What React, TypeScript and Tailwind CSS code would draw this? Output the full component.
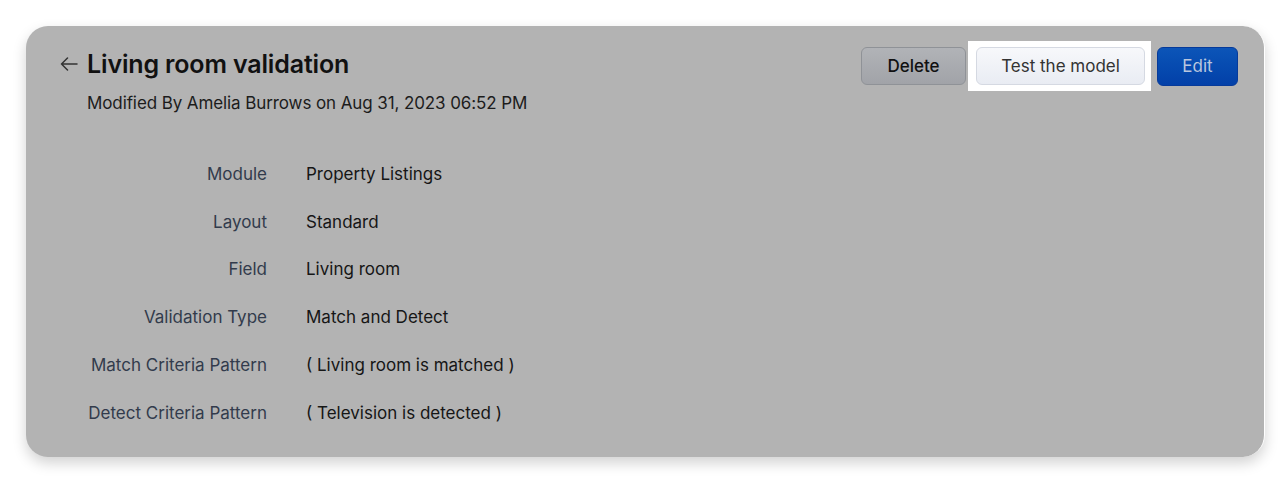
import React from "react";

const rows: [string, string][] = [
  ["Module", "Property Listings"],
  ["Layout", "Standard"],
  ["Field", "Living room"],
  ["Validation Type", "Match and Detect"],
  ["Match Criteria Pattern", "( Living room is matched )"],
  ["Detect Criteria Pattern", "( Television is detected )"],
];

export default function App() {
  return (
    <div
      className="w-[1285px] h-[486px] bg-white pt-[26px] pl-[26px]"
      style={{ fontFamily: "Inter, 'Noto Sans', sans-serif" }}
    >
      <div className="w-[1239px] h-[431px] rounded-[22px] bg-[#b3b3b3] shadow-[0_6px_14px_rgba(0,0,0,0.18)] border-r border-white pl-[34px] pr-[26px] pt-[15px]">
        <div className="flex justify-between items-start">
          <div className="pt-[6px]">
            <div className="flex items-center h-[34px]">
              <svg width="18" height="14" viewBox="0 0 18 14" className="mr-[9px]">
                <path d="M17 7H1.5M7.5 1L1.5 7l6 6" stroke="#333" strokeWidth="1.5" fill="none" strokeLinecap="round" strokeLinejoin="round" />
              </svg>
              <h1 className="text-[25px] font-semibold text-[#111] leading-none tracking-[-0.15px]">Living room validation</h1>
            </div>
            <div className="pl-[27px] mt-[10px] text-[17px] text-[#1c1c1c] tracking-[-0.1px]">
              Modified By Amelia Burrows on Aug 31, 2023 06:52 PM
            </div>
          </div>
          <div className="flex items-center">
            <button className="w-[105px] h-[38px] rounded-[6px] border border-[#8f9297] bg-gradient-to-b from-[#b1b3b7] to-[#a1a3a8] text-[17px] text-[#111] font-medium mr-[2px] pt-[2px]">
              Delete
            </button>
            <div className="bg-white pl-[8px] pr-[6px] py-[6px]">
              <button className="w-[169px] h-[38px] rounded-[6px] border border-[#d5d9e2] bg-gradient-to-b from-[#f7f8fb] to-[#e9ecf3] text-[17px] text-[#333] pt-[2px]">
                Test the model
              </button>
            </div>
            <button className="w-[81px] h-[39px] rounded-[6px] bg-gradient-to-b from-[#0c55b8] to-[#0340a8] border border-[#063a9a] text-[17px] text-[#b9c6de] ml-[6px] pt-[2px]">
              Edit
            </button>
          </div>
        </div>
        <div className="mt-[46px] flex flex-col gap-[23.8px]">
          {rows.map(([k, v]) => (
            <div key={k} className="flex items-center h-[24px] text-[17px]">
              <div className="w-[207px] text-right text-[#323b4c]">{k}</div>
              <div className="ml-[39px] text-[#161616]">{v}</div>
            </div>
          ))}
        </div>
      </div>
    </div>
  );
}
